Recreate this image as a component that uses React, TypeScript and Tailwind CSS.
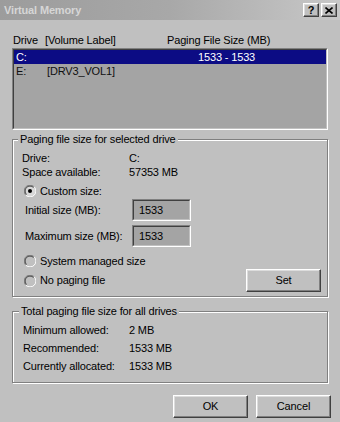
import React from "react";

const raisedBtn =
  "flex items-center justify-center bg-[#c0c0c0] border border-t-white border-l-white border-r-[#404040] border-b-[#404040] shadow-[inset_-1px_-1px_0_#808080,inset_1px_1px_0_#dcdcdc]";

function Radio({ checked }: { checked?: boolean }) {
  return (
    <svg width="12" height="12" viewBox="0 0 12 12" className="shrink-0">
      <circle cx="6" cy="6" r="5.5" fill={checked ? "#d8d8d8" : "#c0c0c0"} />
      <path d="M10.2 1.8 A5.5 5.5 0 0 0 1.8 10.2" fill="none" stroke="#808080" strokeWidth="1" />
      <path d="M9.5 2.5 A4.6 4.6 0 0 0 2.5 9.5" fill="none" stroke="#404040" strokeWidth="1" />
      <path d="M1.8 10.2 A5.5 5.5 0 0 0 10.2 1.8" fill="none" stroke="#ffffff" strokeWidth="1" />
      {checked && <circle cx="6" cy="6" r="2" fill="#000" />}
    </svg>
  );
}

function Field({ value }: { value: string }) {
  return (
    <div className="w-[59px] h-[22px] border border-t-[#808080] border-l-[#808080] border-b-white border-r-white">
      <div className="h-full flex items-center pl-[5px] bg-[#a4a4a4] border border-t-[#404040] border-l-[#404040] border-b-[#c0c0c0] border-r-[#c0c0c0]">
        {value}
      </div>
    </div>
  );
}

export default function App() {
  return (
    <div className="w-[340px] h-[422px] bg-[#c0c0c0] flex flex-col text-[11px] leading-[13px] tracking-[-0.15px] text-black [font-family:'Liberation_Sans',Arial,sans-serif]">
      {/* Title bar */}
      <div className="h-[20px] shrink-0 flex items-center justify-between pl-[4px] pr-[3px] bg-gradient-to-r from-[#9c9c9c] via-[#a8a8a8] to-[#c8c8c8]">
        <span className="font-bold text-[#d6d6d6]">Virtual Memory</span>
        <div className="flex gap-[2px]">
          <div className={`${raisedBtn} w-[16px] h-[14px] font-bold text-[11px] leading-none`}>?</div>
          <div className={`${raisedBtn} w-[16px] h-[14px]`}>
            <svg width="8" height="7" viewBox="0 0 8 7">
              <path d="M0.5 0.5 L7.5 6.5 M7.5 0.5 L0.5 6.5" stroke="#000" strokeWidth="1.6" />
            </svg>
          </div>
        </div>
      </div>

      <div className="px-3 flex flex-col">
        {/* List header */}
        <div className="mt-[14px] flex pl-px">
          <span className="w-[32px]">Drive</span>
          <span className="w-[122px]">[Volume Label]</span>
          <span>Paging File Size (MB)</span>
        </div>

        {/* List box */}
        <div className="mt-px h-[82px] border border-t-[#808080] border-l-[#808080] border-b-white border-r-white">
          <div className="h-full bg-[#a4a4a4] border border-t-[#404040] border-l-[#404040] border-b-[#c0c0c0] border-r-[#c0c0c0]">
            <div className="h-[14px] flex items-center bg-[#0c0c84] text-white pl-[2px]">
              <span className="w-[31px]">C:</span>
              <span className="w-[151px]"></span>
              <span>1533 - 1533</span>
            </div>
            <div className="h-[14px] flex items-center pl-[2px] text-[#101010]">
              <span className="w-[31px]">E:</span>
              <span>[DRV3_VOL1]</span>
            </div>
          </div>
        </div>

        {/* Group 1 */}
        <fieldset className="mt-[3px] border border-[#808080] shadow-[inset_1px_1px_0_#fff,1px_1px_0_#fff] pl-[9px] pr-[6px] pb-[4px]">
          <legend className="ml-[-4px] px-[2px] bg-[#c0c0c0] leading-[13px]">Paging file size for selected drive</legend>
          <div className="mt-[5px] grid grid-cols-[107px_1fr] leading-[14px]">
            <span>Drive:</span>
            <span>C:</span>
            <span>Space available:</span>
            <span>57353 MB</span>
          </div>
          <div className="mt-[5px] h-[14px] flex items-center gap-[4px] pl-[2px]">
            <Radio checked />
            <span>Custom size:</span>
          </div>
          <div className="mt-px h-[22px] flex items-center">
            <span className="w-[110px] pl-[3px]">Initial size (MB):</span>
            <Field value="1533" />
          </div>
          <div className="mt-[4px] h-[22px] flex items-center">
            <span className="w-[110px] pl-[3px]">Maximum size (MB):</span>
            <Field value="1533" />
          </div>
          <div className="mt-[7px] h-[14px] flex items-center gap-[4px] pl-[2px]">
            <Radio />
            <span>System managed size</span>
          </div>
          <div className="mt-px h-[23px] flex items-center justify-between">
            <div className="flex items-center gap-[4px] pl-[2px]">
              <Radio />
              <span>No paging file</span>
            </div>
            <div className={`${raisedBtn} w-[75px] h-[23px]`}>Set</div>
          </div>
        </fieldset>

        {/* Group 2 */}
        <fieldset className="mt-[8px] border border-[#808080] shadow-[inset_1px_1px_0_#fff,1px_1px_0_#fff] pl-[10px] pb-[7px]">
          <legend className="ml-[-4px] px-[2px] bg-[#c0c0c0] leading-[13px]">Total paging file size for all drives</legend>
          <div className="mt-[3px] grid grid-cols-[106px_1fr] leading-[18px]">
            <span>Minimum allowed:</span>
            <span>2 MB</span>
            <span>Recommended:</span>
            <span>1533 MB</span>
            <span>Currently allocated:</span>
            <span>1533 MB</span>
          </div>
        </fieldset>
      </div>

      {/* Footer buttons */}
      <div className="mt-[12px] flex justify-end gap-[8px] pr-[9px]">
        <div className={`${raisedBtn} w-[75px] h-[23px]`}>OK</div>
        <div className={`${raisedBtn} w-[75px] h-[23px]`}>Cancel</div>
      </div>
    </div>
  );
}
